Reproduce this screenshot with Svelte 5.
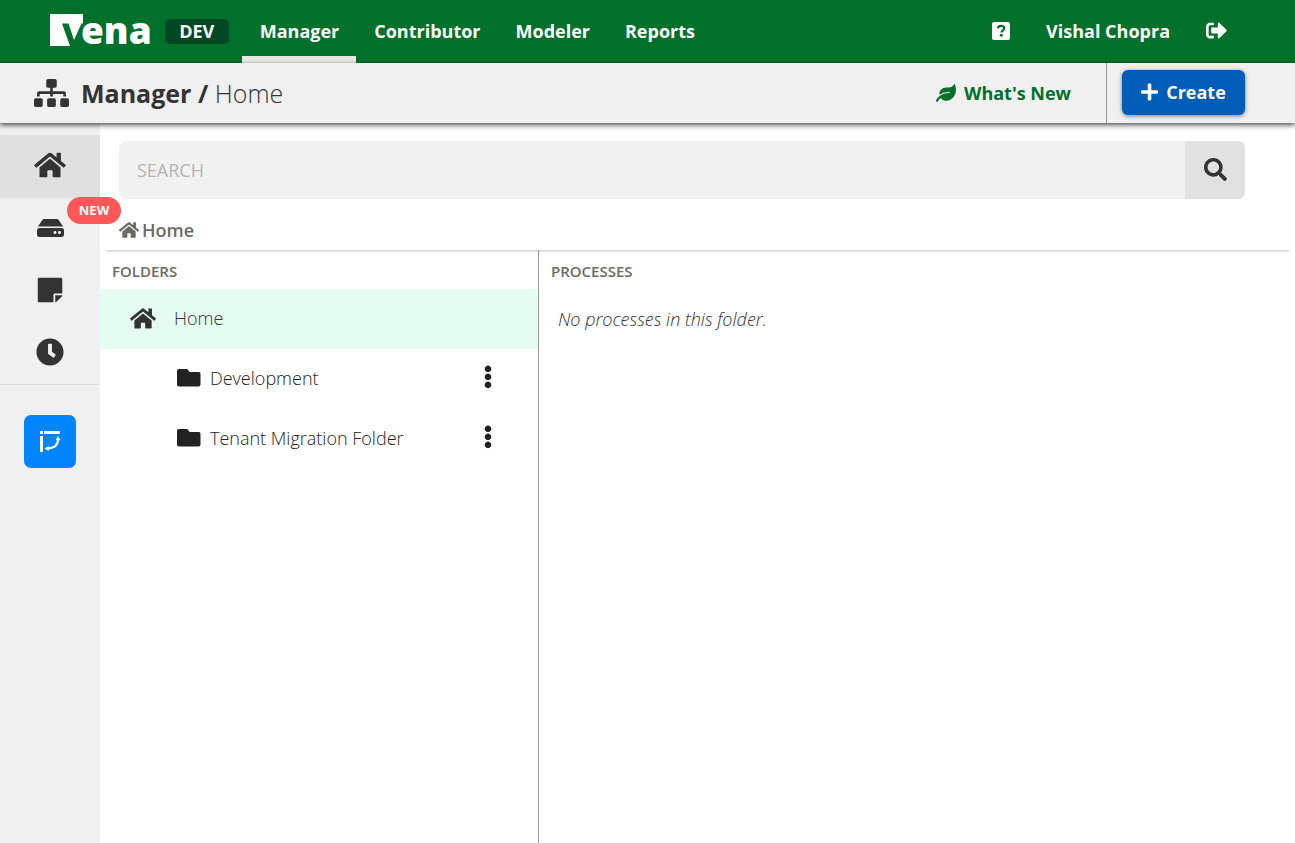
<script>
  const icons = {
    home: { box: '0 0 576 512', d: 'M280.37 148.26L96 300.11V464a16 16 0 0 0 16 16l112.06-.29a16 16 0 0 0 15.92-16V368a16 16 0 0 1 16-16h64a16 16 0 0 1 16 16v95.64a16 16 0 0 0 16 16.05L464 480a16 16 0 0 0 16-16V300L295.67 148.26a12.19 12.19 0 0 0-15.3 0zM571.6 251.47L488 182.56V44.05a12 12 0 0 0-12-12h-56a12 12 0 0 0-12 12v72.61L318.47 43a48 48 0 0 0-61 0L4.34 251.47a12 12 0 0 0-1.6 16.9l25.5 31A12 12 0 0 0 45.15 301l235.22-193.74a12.19 12.19 0 0 1 15.3 0L530.9 301a12 12 0 0 0 16.9-1.6l25.5-31a12 12 0 0 0-1.7-16.93z' },
    sitemap: { box: '0 0 640 512', d: 'M128 352H32c-17.67 0-32 14.33-32 32v96c0 17.67 14.33 32 32 32h96c17.67 0 32-14.33 32-32v-96c0-17.67-14.33-32-32-32zm-24-80h192v48h48v-48h192v48h48v-57.59c0-21.17-17.23-38.41-38.41-38.41H344v-64h40c17.67 0 32-14.33 32-32V32c0-17.67-14.33-32-32-32H256c-17.67 0-32 14.33-32 32v96c0 17.67 14.33 32 32 32h40v64H94.41C73.23 224 56 241.23 56 262.41V320h48v-48zm264 80h-96c-17.67 0-32 14.33-32 32v96c0 17.67 14.33 32 32 32h96c17.67 0 32-14.33 32-32v-96c0-17.67-14.33-32-32-32zm240 0h-96c-17.67 0-32 14.33-32 32v96c0 17.67 14.33 32 32 32h96c17.67 0 32-14.33 32-32v-96c0-17.67-14.33-32-32-32z' },
    drive: { box: '0 0 576 512', d: 'M576 304v96c0 26.51-21.49 48-48 48H48c-26.51 0-48-21.49-48-48v-96c0-26.51 21.49-48 48-48h480c26.51 0 48 21.49 48 48zm-48-80a79.557 79.557 0 0 1 30.777 6.165L462.25 85.374A48.003 48.003 0 0 0 422.311 64H153.689a48 48 0 0 0-39.938 21.374L17.223 230.165A79.557 79.557 0 0 1 48 224h480zm-48 96c-17.673 0-32 14.327-32 32s14.327 32 32 32 32-14.327 32-32-14.327-32-32-32zm-96 0c-17.673 0-32 14.327-32 32s14.327 32 32 32 32-14.327 32-32-14.327-32-32-32z' },
    note: { box: '0 0 448 512', d: 'M312 320h136V56c0-13.300-10.700-24-24-24H24C10.700 32 0 42.700 0 56v400c0 13.300 10.700 24 24 24h264V344c0-13.200 10.800-24 24-24zm129 55l-98 98c-4.500 4.500-10.600 7-17 7h-6V352h128v6.100c0 6.300-2.500 12.400-7 16.900z' },
    clock: { box: '0 0 512 512', d: 'M256 8C119 8 8 119 8 256s111 248 248 248 248-111 248-248S393 8 256 8zm57.100 350.100L224.900 294c-3.100-2.300-4.900-5.900-4.900-9.700V116c0-6.600 5.400-12 12-12h48c6.600 0 12 5.400 12 12v137.700l63.500 46.200c5.400 3.900 6.500 11.400 2.600 16.800l-28.200 38.800c-3.900 5.300-11.400 6.500-16.800 2.600z' },
    search: { box: '0 0 512 512', d: 'M505 442.700L405.300 343c-4.500-4.500-10.600-7-17-7H372c27.600-35.300 44-79.700 44-128C416 93.100 322.900 0 208 0S0 93.100 0 208s93.100 208 208 208c48.300 0 92.700-16.400 128-44v16.300c0 6.400 2.500 12.500 7 17l99.700 99.700c9.400 9.400 24.600 9.400 33.900 0l28.300-28.300c9.400-9.400 9.400-24.600.1-34zM208 336c-70.700 0-128-57.200-128-128 0-70.700 57.200-128 128-128 70.700 0 128 57.200 128 128 0 70.700-57.200 128-128 128z' },
    leaf: { box: '0 0 576 512', d: 'M546.200 9.700c-5.600-12.500-21.600-13-28.300-1.200C486.900 62.400 431.400 96 368 96h-80C182 96 96 182 96 288c0 7 .8 13.700 1.500 20.500C161.300 262.800 253.400 224 384 224c8.800 0 16 7.200 16 16s-7.200 16-16 16C132.600 256 26 410.100 2.400 468c-6.600 16.300 1.200 34.900 17.500 41.600 16.400 6.800 35-1.100 41.800-17.300 1.500-3.600 20.900-47.900 71.900-90.600 32.400 43.900 94 85.800 174.900 77.200C465.500 467.500 576 326.700 576 154.300c0-50.200-10.800-102.200-29.800-144.600z' },
    plus: { box: '0 0 448 512', d: 'M416 208H272V64c0-17.670-14.330-32-32-32h-32c-17.670 0-32 14.330-32 32v144H32c-17.670 0-32 14.330-32 32v32c0 17.670 14.330 32 32 32h144v144c0 17.670 14.330 32 32 32h32c17.670 0 32-14.330 32-32V304h144c17.670 0 32-14.330 32-32v-32c0-17.670-14.330-32-32-32z' },
    logout: { box: '0 0 512 512', d: 'M497 273L329 441c-15 15-41 4.500-41-17v-96H152c-13.300 0-24-10.700-24-24v-96c0-13.300 10.700-24 24-24h136V88c0-21.400 25.900-32 41-17l168 168c9.300 9.400 9.300 24.600 0 34zM192 436v-40c0-6.600-5.400-12-12-12H96c-17.700 0-32-14.300-32-32V160c0-17.700 14.300-32 32-32h84c6.600 0 12-5.400 12-12V76c0-6.600-5.400-12-12-12H96c-53 0-96 43-96 96v192c0 53 43 96 96 96h84c6.600 0 12-5.400 12-12z' },
    dots: { box: '0 0 8 24', d: 'M4 0.600a3.300 3.300 0 1 0 .01 0zM4 8.600a3.300 3.300 0 1 0 .01 0zM4 16.600a3.300 3.300 0 1 0 .01 0z' }
  };
  const tabs = ['Manager', 'Contributor', 'Modeler', 'Reports'];
  const rail = [
    { label: 'Home', icon: 'home', w: 32, h: 28 },
    { label: 'Data', icon: 'drive', w: 27, h: 24, badge: 'NEW' },
    { label: 'Notes', icon: 'note', w: 26, h: 28 },
    { label: 'History', icon: 'clock', w: 28, h: 28 }
  ];
  const folders = ['Development', 'Tenant Migration Folder'];
  let activeTab = $state('Manager');
  let activeRail = $state('Home');
  let query = $state('');
</script>

{#snippet icon(name, w, h)}
  <svg width={w} height={h} viewBox={icons[name].box} fill="currentColor" aria-hidden="true"><path d={icons[name].d} /></svg>
{/snippet}

<div class="app">
  <header class="topbar">
    <a class="logo" href="#home">
      <svg width="33" height="32" viewBox="0 0 33 32" fill="#fff" aria-hidden="true">
        <path d="M0 0H33V9.500H31.500L24 26L18.500 9.500H12L20 32H0Z" />
      </svg>
      <span>ena</span>
    </a>
    <span class="env">DEV</span>
    <nav class="tabs">
      {#each tabs as tab}
        <a href="#{tab}" class:active={tab === activeTab} onclick={() => (activeTab = tab)}>{tab}</a>
      {/each}
    </nav>
    <div class="account">
      <button aria-label="Help">
        <svg width="18" height="18" viewBox="0 0 18 18" aria-hidden="true">
          <rect width="18" height="18" rx="2" fill="#fff" />
          <path d="M5.800 6.300C6.200 4.500 7.500 3.800 9 3.800c1.900 0 3.200 1 3.200 2.500 0 2.100-2.700 2-2.700 4.100" fill="none" stroke="#00702a" stroke-width="2.200" />
          <circle cx="9.300" cy="13.300" r="1.500" fill="#00702a" />
        </svg>
      </button>
      <a href="#account">Vishal Chopra</a>
      <button aria-label="Log out">{@render icon('logout', 21, 21)}</button>
    </div>
  </header>

  <div class="titlebar">
    {@render icon('sitemap', 35, 28)}
    <h1>Manager / <span>Home</span></h1>
    <a class="news" href="#news">{@render icon('leaf', 20, 18)}What's New</a>
    <div class="action">
      <button class="create">{@render icon('plus', 17, 20)}Create</button>
    </div>
  </div>

  <div class="body">
    <aside class="rail">
      <div class="rail-items">
        {#each rail as item}
          <button aria-label={item.label} class:active={item.label === activeRail} onclick={() => (activeRail = item.label)}>
            {@render icon(item.icon, item.w, item.h)}
            {#if item.badge}<span class="badge">{item.badge}</span>{/if}
          </button>
        {/each}
      </div>
      <button class="pivot" aria-label="Pivot">
        <svg width="22" height="22" viewBox="0 0 22 22" fill="#fff" aria-hidden="true">
          <path d="M1 0h3v3H1zM5 0h16v3H5zM1 5h3v16H1z" />
          <path d="M19 8c.3 6-3 9-10.500 9.500" fill="none" stroke="#fff" stroke-width="2" />
          <path d="M19 5l2.500 4.200h-5zM5.500 17.500l4.200-2.500v5z" />
        </svg>
      </button>
    </aside>

    <main>
      <form class="search" onsubmit={(e) => e.preventDefault()}>
        <input type="search" aria-label="Search" placeholder="SEARCH" bind:value={query} />
        <button aria-label="Search">{@render icon('search', 23, 23)}</button>
      </form>
      <nav class="crumbs"><a href="#home">{@render icon('home', 20, 18)}Home</a></nav>
      <div class="panes">
        <section class="folders">
          <h2>FOLDERS</h2>
          <a class="root" href="#home">{@render icon('home', 26, 23)}Home</a>
          <ul>
            {#each folders as folder}
              <li>
                <a href="#{folder}">
                  <svg width="24" height="18" viewBox="0 0 24 18" fill="currentColor" aria-hidden="true"><path d="M2 0h7.500q.8 0 1.300.6L12.500 3H22q1.500 0 1.500 2v10.500q0 2-2 2H2q-2 0-2-2V2q0-2 2-2z" /></svg>
                  {folder}
                </a>
                <button aria-label="Options for {folder}">{@render icon('dots', 8, 24)}</button>
              </li>
            {/each}
          </ul>
        </section>
        <section class="processes">
          <h2>PROCESSES</h2>
          <p>No processes in this folder.</p>
        </section>
      </div>
    </main>
  </div>
</div>

<style>
  :global(body) { margin: 0; }
  .app { min-height: 100vh; display: flex; flex-direction: column; font: 18px/24px "Open Sans", sans-serif; color: #333; background: #fff; }
  svg { display: block; flex: none; }
  a { color: inherit; text-decoration: none; }
  button { border: 0; padding: 0; background: none; color: inherit; font: inherit; cursor: pointer; display: flex; align-items: center; justify-content: center; }
  h1, h2, p, ul { margin: 0; padding: 0; }

  .topbar { box-sizing: border-box; height: 63px; display: flex; align-items: center; padding: 0 68px 2px 50px; background: #00702a; color: #fff; font-weight: 700; }
  .logo { display: flex; align-items: center; height: 32px; margin-bottom: 2px; }
  .logo span { margin-left: -2px; font-size: 37px; line-height: 32px; font-weight: 800; }
  .env { width: 64px; line-height: 25px; border-radius: 5px; margin: 2px 0 0 13px; background: #004724; text-align: center; }
  .tabs { display: flex; align-self: stretch; margin: 0 0 -2px 13px; }
  .tabs a { box-sizing: border-box; padding: 19px 17px 0 18px; border-bottom: 7px solid transparent; }
  .tabs a.active { border-color: #e7e8e1; }
  .account { display: flex; align-items: center; gap: 36px; margin-left: auto; }

  .titlebar { position: relative; z-index: 1; height: 60px; display: flex; align-items: center; padding: 0 50px 0 34px; background: #f0f0f0; box-shadow: 0 2px 5px rgba(0, 0, 0, .7); }
  h1 { margin-left: 12px; font-size: 25px; line-height: 32px; font-weight: 700; }
  h1 span { font-weight: 300; }
  .news { display: flex; align-items: center; gap: 8px; margin-left: auto; color: #00702a; font-weight: 700; }
  .action { align-self: stretch; display: flex; align-items: center; margin-left: 35px; padding-left: 15px; border-left: 1px solid #999; }
  .create { height: 45px; width: 123px; gap: 8px; border-radius: 6px; background: #005eb8; color: #fff; font-weight: 700; box-shadow: 0 1px 4px rgba(0, 0, 0, .5); margin-bottom: 2px; }

  .body { flex: 1; display: flex; }
  .rail { width: 100px; flex: none; background: #f0f0f0; }
  .rail-items { padding-top: 12px; border-bottom: 1px solid #ddd; }
  .rail-items button { position: relative; box-sizing: border-box; width: 100%; height: 62px; padding-bottom: 3px; }
  .rail-items button.active { height: 63px; background: #e0e0e0; }
  .badge { position: absolute; top: -1px; left: 67px; width: 54px; border-radius: 14px; background: #ff5757; color: #fff; font-size: 13px; line-height: 27px; font-weight: 700; }
  .pivot { width: 52px; height: 53px; margin: 30px auto 0; border-radius: 7px; background: #0085ff; }

  main { flex: 1; min-width: 0; display: flex; flex-direction: column; }
  .search { display: flex; height: 58px; margin: 18px 50px 0 19px; border-radius: 7px; overflow: hidden; background: #f1f1f1; }
  .search input { flex: 1; min-width: 0; border: 0; padding: 0 18px; background: none; font: inherit; color: inherit; outline: 0; }
  .search input::placeholder { color: #b3b3b3; opacity: 1; }
  .search button { width: 60px; padding-bottom: 2px; background: #e1e1e1; }
  .crumbs { height: 51px; box-sizing: border-box; padding: 19px 15px 0; margin: 0 4px; color: #6b6b66; font-weight: 600; box-shadow: 0 3px 3px -2px rgba(0, 0, 0, .25); }
  .crumbs a { display: inline-flex; align-items: center; gap: 3px; }
  .panes { flex: 1; display: flex; }
  .folders { width: 438px; flex: none; border-right: 1px solid #999; }
  .processes { flex: 1; }
  h2 { padding: 9px 12px 6px; font-size: 15px; line-height: 24px; font-weight: 600; color: #6b6b66; }
  .root, li { box-sizing: border-box; display: flex; align-items: center; height: 60px; padding-bottom: 2px; font-weight: 300; }
  .root { gap: 18px; padding-left: 30px; background: #e5fcf0; }
  ul { list-style: none; }
  li { justify-content: space-between; padding-left: 77px; padding-right: 42px; color: #222; }
  li a { display: flex; align-items: center; gap: 9px; }
  li button { width: 16px; height: 32px; padding-bottom: 3px; }
  p { padding: 18px 19px; font-style: italic; font-weight: 300; color: #333; }
</style>
